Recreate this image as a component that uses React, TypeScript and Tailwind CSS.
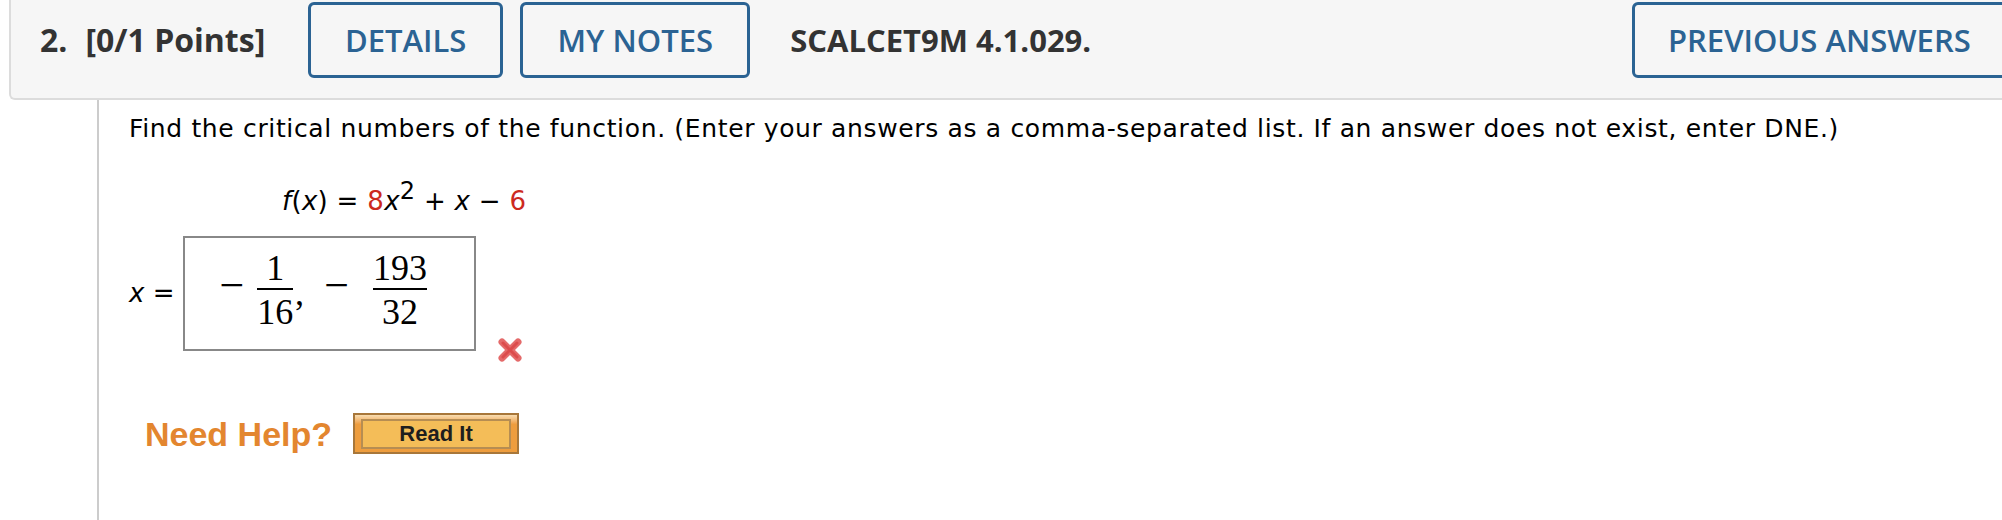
import React from "react";

function Fraccao({ cima, baixo, largura }: { cima: string; baixo: string; largura: string }) {
  return (
    <div className={`flex flex-col items-center ${largura}`}>
      <span className="leading-[36px] pb-[2px]">{cima}</span>
      <div className="h-[2px] w-full bg-black" />
      <span className="leading-[36px] mt-[4px]">{baixo}</span>
    </div>
  );
}

function XVermelho() {
  return (
    <svg width="26" height="26" viewBox="0 0 26 26">
      <g strokeLinecap="round">
        <line x1="5" y1="5" x2="21" y2="21" stroke="#e46a6a" strokeWidth="7" />
        <line x1="21" y1="5" x2="5" y2="21" stroke="#e46a6a" strokeWidth="7" />
        <line x1="6" y1="6" x2="20" y2="20" stroke="#dc4c4c" strokeWidth="3" />
        <line x1="20" y1="6" x2="6" y2="20" stroke="#dc4c4c" strokeWidth="3" />
      </g>
    </svg>
  );
}

export default function App() {
  return (
    <div className="w-full h-[520px] bg-white overflow-hidden">
      {/* cabecalho da questao */}
      <div className="ml-[9px] h-[100px] bg-[#f6f6f6] border-l-2 border-b-2 border-[#dcdcdc] rounded-bl-[6px] flex items-start pt-[2px] pl-[29px] font-['Open_Sans',sans-serif] text-[31px] leading-none">
        <div className="h-[76px] flex items-center font-bold text-[32px] text-[#333]">
          <span>2.</span>
          <span className="ml-[18px]">[0/1 Points]</span>
        </div>
        <button className="ml-[43px] w-[195px] h-[76px] shrink-0 border-[3px] border-[#2b6393] rounded-[6px] text-[#2b6393] font-semibold">
          DETAILS
        </button>
        <button className="ml-[17px] w-[230px] h-[76px] shrink-0 border-[3px] border-[#2b6393] rounded-[6px] text-[#2b6393] font-semibold">
          MY NOTES
        </button>
        <div className="ml-[40px] h-[76px] flex items-center font-bold text-[#333] whitespace-nowrap">
          SCALCET9M 4.1.029.
        </div>
        <button className="ml-auto -mr-[14px] w-[384px] h-[76px] shrink-0 border-[3px] border-[#2b6393] rounded-[6px] text-[#2b6393] font-semibold whitespace-nowrap text-left pl-[33px]">
          PREVIOUS ANSWERS
        </button>
      </div>

      {/* corpo */}
      <div className="ml-[97px] border-l-2 border-[#cccccc] h-[420px] pl-[30px] pt-[13px] font-['DejaVu_Sans',Verdana,sans-serif] text-black">
        <p className="text-[25px] leading-[32px] tracking-[0.65px] whitespace-nowrap">
          Find the critical numbers of the function. (Enter your answers as a comma-separated list. If an answer does not exist, enter DNE.)
        </p>

        <div className="mt-[34px] h-[32px] pl-[153px] text-[26px] leading-[32px] tracking-[0.3px] whitespace-nowrap">
          <i>f</i>(<i>x</i>) = <span className="text-[#cc2a1e]">8</span>
          <i>x</i>
          <span className="text-[24px] leading-none align-[11px]">2</span> + <i>x</i> − <span className="text-[#cc2a1e]">6</span>
        </div>

        <div className="mt-[25px] flex items-start">
          <div className="h-[115px] flex items-center text-[26px] whitespace-nowrap">
            <i>x</i>&nbsp;=
          </div>
          <div className="ml-[9px] w-[293px] h-[115px] border-2 border-[#888] flex items-center pl-[34px] pb-[7px] font-['Liberation_Serif',serif] text-[36px]">
            <span className="text-[44px] leading-[32px] mb-[8px]">−</span>
            <Fraccao cima="1" baixo="16" largura="ml-[13px]" />
            <span className="leading-[36px] mt-[46px]">’</span>
            <span className="text-[44px] leading-[32px] mb-[8px] ml-[19px]">−</span>
            <Fraccao cima="193" baixo="32" largura="ml-[21px] px-[3px]" />
          </div>
          <div className="ml-[21px] mt-[101px]">
            <XVermelho />
          </div>
        </div>

        <div className="mt-[50px] pl-[16px] flex items-center font-['Liberation_Sans',Arial,sans-serif]">
          <span className="text-[34px] leading-[40px] font-bold text-[#e3862f]">Need Help?</span>
          <button className="ml-[21px] w-[166px] h-[41px] border-2 border-[#a8773a] bg-linear-to-b from-[#f8ddb0] from-0% to-[#ee9d3e] to-25% px-[6px] pt-[4px] pb-[3px]">
            <div className="h-full border-2 border-[#b68d52] bg-[#f4bd58] flex items-center justify-center text-[22px] font-bold text-[#1e1e1e] leading-none">
              Read It
            </div>
          </button>
        </div>
      </div>
    </div>
  );
}
